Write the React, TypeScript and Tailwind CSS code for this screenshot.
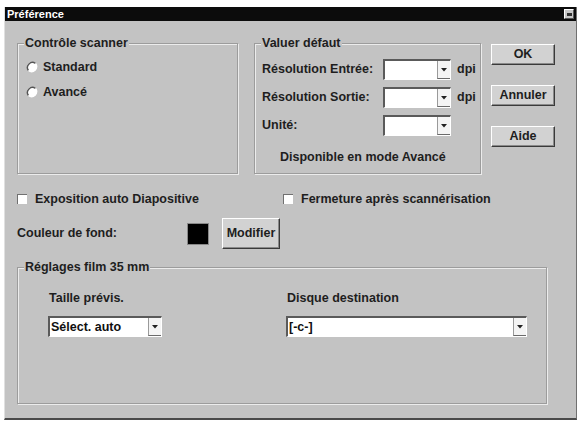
import React from "react";

const font = { fontFamily: '"Liberation Sans", Arial, sans-serif' };

function Radio({ label }: { label: string }) {
  return (
    <div className="flex h-[16px] items-center gap-[5px] pl-[8px]">
      <svg width="12" height="12" viewBox="0 0 12 12">
        <circle cx="6" cy="6" r="5" fill="#fff" />
        <path d="M9.5 2.5 A5 5 0 0 0 2.5 9.5" fill="none" stroke="#555" strokeWidth="1.4" />
        <path d="M2.5 9.5 A5 5 0 0 0 9.5 2.5" fill="none" stroke="#fff" strokeWidth="1.4" />
      </svg>
      <span>{label}</span>
    </div>
  );
}

function Checkbox({ label }: { label: string }) {
  return (
    <div className="flex items-center gap-[8px]">
      <div className="size-[10px] border-t border-l border-t-[#707070] border-l-[#707070] bg-white" />
      <span>{label}</span>
    </div>
  );
}

function Combo({ width, value }: { width: string; value?: string }) {
  return (
    <div
      className={`flex h-[21px] ${width} border-t-2 border-l-2 border-t-[#5a5a5a] border-l-[#5a5a5a] border-b border-r border-b-white border-r-white bg-white`}
    >
      <div className="flex flex-1 items-center pl-[1px] text-[#101010]">{value}</div>
      <div className="flex w-[13px] items-center justify-center border-l border-b border-l-[#9a9a9a] border-b-[#6a6a6a] bg-[#f4f4f4]">
        <svg width="6" height="4" viewBox="0 0 6 4">
          <path d="M0 0 H6 L3 3.5 Z" fill="#222" />
        </svg>
      </div>
    </div>
  );
}

function Button({ label, className }: { label: string; className: string }) {
  return (
    <div
      className={`flex items-center justify-center border border-t-white border-l-white border-b-[#3a3a3a] border-r-[#3a3a3a] bg-[#d2d2d2] shadow-[inset_-1px_-1px_0_#8a8a8a] ${className}`}
    >
      {label}
    </div>
  );
}

function Group({
  title,
  className,
  children,
}: {
  title: string;
  className: string;
  children?: React.ReactNode;
}) {
  return (
    <fieldset
      className={`border border-[#9c9c9c] shadow-[inset_1px_1px_0_#ececec,1px_1px_0_#ececec] ${className}`}
    >
      <legend className="ml-[6px] bg-[#c3c3c3] px-[1px] leading-[14px]">{title}</legend>
      {children}
    </fieldset>
  );
}

export default function App() {
  return (
    <div
      className="h-[423px] w-[579px] bg-white pt-[7px] pl-[4px] text-[12.5px] font-bold text-[#1e1e1e]"
      style={font}
    >
      <div className="flex h-[413px] w-[573px] flex-col border-l border-r border-b-2 border-l-[#e0e0e0] border-r-[#707070] border-b-[#4a4a4a] bg-[#c3c3c3]">
        {/* Title bar */}
        <div className="flex h-[14px] items-center justify-between bg-[#0c0c0c] pl-[2px] pr-[2px]">
          <span className="text-[11px] leading-[13px] text-white">Préférence</span>
          <div className="flex size-[10px] items-center justify-center border border-t-white border-l-white border-b-[#555] border-r-[#555] bg-[#c8c8c8]">
            <div className="h-[3px] w-[5px] bg-[#333]" />
          </div>
        </div>

        <div className="flex flex-col pl-[12px]">
          {/* Top row */}
          <div className="mt-[15px] flex">
            <Group title="Contrôle scanner" className="h-[138px] w-[221px]">
              <div className="flex flex-col gap-[9px] pt-[9px]">
                <Radio label="Standard" />
                <Radio label="Avancé" />
              </div>
            </Group>

            <Group title="Valuer défaut" className="ml-[16px] h-[138px] w-[227px]">
              <div className="flex flex-col gap-[7px] pt-[9px] pl-[7px]">
                <div className="flex items-center">
                  <span className="w-[121px]">Résolution Entrée:</span>
                  <Combo width="w-[68px]" />
                  <span className="ml-[6px]">dpi</span>
                </div>
                <div className="flex items-center">
                  <span className="w-[121px]">Résolution Sortie:</span>
                  <Combo width="w-[68px]" />
                  <span className="ml-[6px]">dpi</span>
                </div>
                <div className="flex items-center">
                  <span className="w-[121px]">Unité:</span>
                  <Combo width="w-[68px]" />
                </div>
                <div className="mt-[7px] pl-[18px] leading-[14px]">Disponible en mode Avancé</div>
              </div>
            </Group>

            <div className="ml-[10px] flex flex-col gap-[20px] pt-[8px]">
              <Button label="OK" className="h-[21px] w-[64px]" />
              <Button label="Annuler" className="h-[21px] w-[64px]" />
              <Button label="Aide" className="h-[21px] w-[64px]" />
            </div>
          </div>

          {/* Checkboxes */}
          <div className="mt-[18px] flex h-[14px] items-center">
            <div className="w-[266px]">
              <Checkbox label="Exposition auto Diapositive" />
            </div>
            <Checkbox label="Fermeture après scannérisation" />
          </div>

          {/* Background colour */}
          <div className="mt-[12px] flex h-[31px] items-center">
            <span className="w-[170px]">Couleur de fond:</span>
            <div className="size-[22px] border border-[#888] bg-black" />
            <Button label="Modifier" className="ml-[13px] h-[31px] w-[58px]" />
          </div>

          {/* Film settings */}
          <Group title="Réglages film 35 mm" className="mt-[11px] h-[144px] w-[530px]">
            <div className="flex pt-[17px] pl-[30px]">
              <div className="flex w-[238px] flex-col gap-[11px]">
                <span className="pl-[1px] leading-[14px]">Taille prévis.</span>
                <Combo width="w-[114px]" value="Sélect. auto" />
              </div>
              <div className="flex w-[241px] flex-col gap-[11px]">
                <span className="pl-[1px] leading-[14px]">Disque destination</span>
                <Combo width="w-[241px]" value="[-c-]" />
              </div>
            </div>
          </Group>
        </div>
      </div>
    </div>
  );
}
